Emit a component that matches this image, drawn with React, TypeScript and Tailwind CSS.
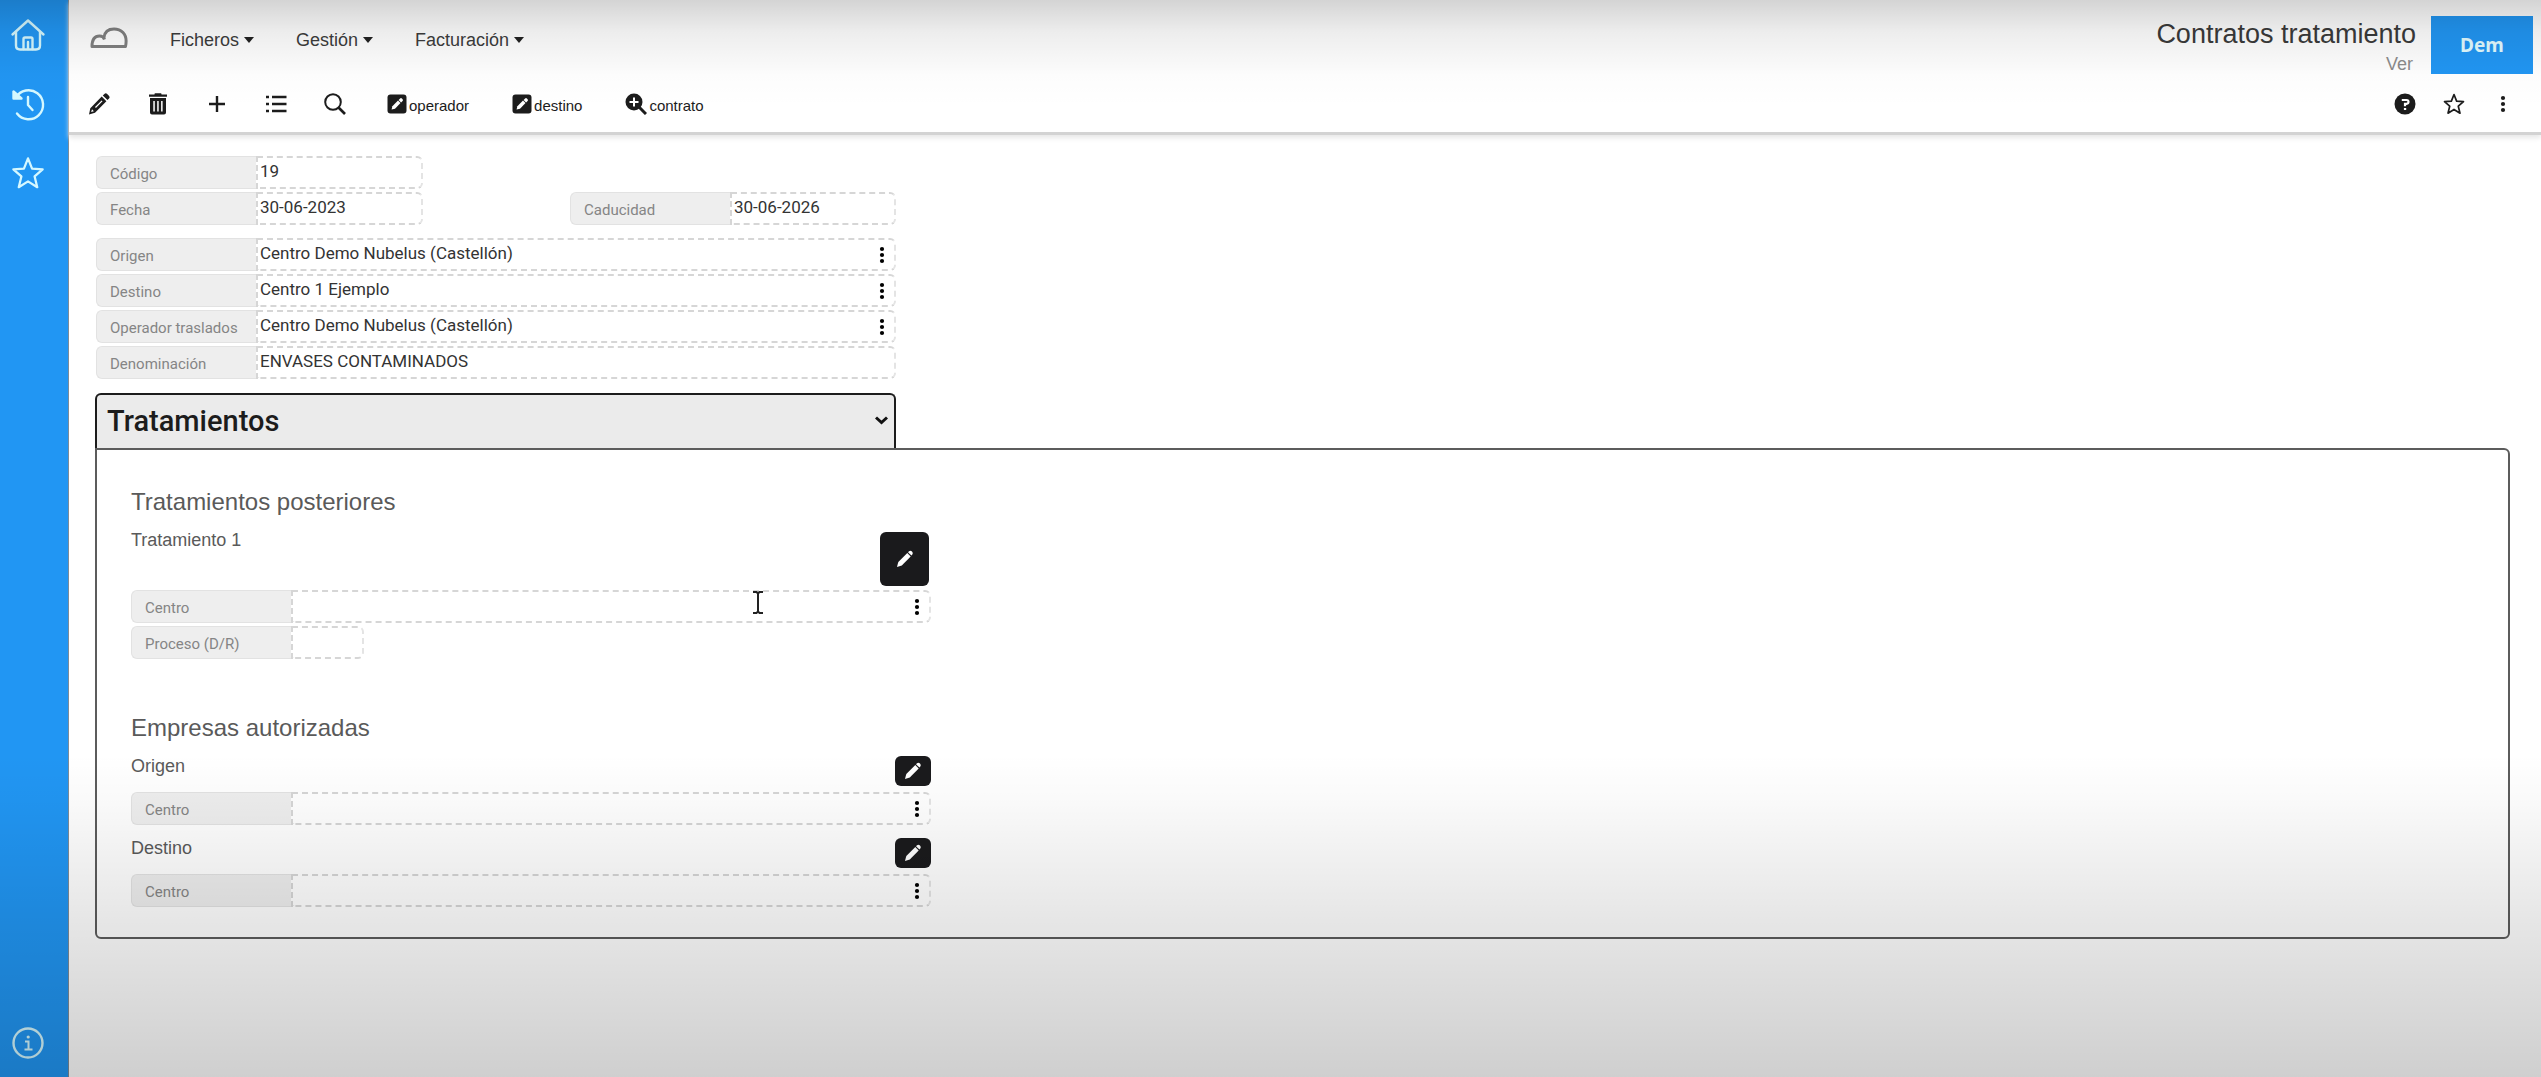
import { useState } from "react";
import type { ReactNode } from "react";

const menus = ["Ficheros", "Gestión", "Facturación"];

const HomeIcon = () => (
  <svg className="size-9" viewBox="0 0 36 36" fill="none" stroke="currentColor" strokeWidth="2.4" strokeLinecap="round" strokeLinejoin="round">
    <path d="M2.500 17.500 18 3.500 33.500 17.500" />
    <path d="M6 15v13.500q0 4 4 4h16q4 0 4-4V15" />
    <path d="M13.500 32V22q0-1.500 1.500-1.500h6q1.500 0 1.500 1.500V32M18 25v7" />
  </svg>
);

const HistoryIcon = () => (
  <svg className="size-9" viewBox="0 0 36 36" fill="none" stroke="currentColor" strokeWidth="2.4" strokeLinecap="round" strokeLinejoin="round">
    <path d="M6 11.500A14.500 14.500 0 1 1 7 27.500" />
    <path d="M3.500 5.500v7h8Z" fill="currentColor" />
    <path d="M18 11v8l4.500 5" />
  </svg>
);

const StarIcon = ({ className, strokeWidth = 2.4 }: { className?: string; strokeWidth?: number }) => (
  <svg className={className} viewBox="0 0 36 36" fill="none" stroke="currentColor" strokeWidth={strokeWidth} strokeLinejoin="round">
    <path d="M18 2.500 22.300 13.300 33.500 14.100 25 21.600 27.800 33 18 26.900 8.200 33 11 21.600 2.500 14.100 13.700 13.300Z" />
  </svg>
);

const InfoIcon = () => (
  <svg className="size-8" viewBox="0 0 32 32" fill="none" stroke="currentColor" strokeWidth="2">
    <circle cx="16" cy="16" r="14.500" strokeWidth="2.4" />
    <circle cx="16.200" cy="10" r="1.600" fill="currentColor" stroke="none" />
    <path d="M13 14.500h3.500V22M12.500 22.500h8" />
  </svg>
);

const CloudLogo = () => (
  <svg className="h-[22px] w-[38px]" viewBox="0 0 38 22" fill="none" stroke="#808080" strokeWidth="3" strokeLinejoin="round">
    <path d="M14.500 12.500Q13.500 9 9.500 9 2 9 2 19.500H35.500Q37.500 10 33 5.500 29.500 2 24 2 15 2 14 10.500" />
  </svg>
);

const PencilIcon = ({ className }: { className?: string }) => (
  <svg className={className} viewBox="0 0 22 22" fill="currentColor">
    <path d="M14.800 2.400 16.400.9q1.400-1.200 2.800.1l1.700 1.700q1.300 1.400.1 2.800l-1.500 1.600Z" />
    <path fillRule="evenodd" d="M13.700 3.500 18.400 8.200 7 19.800 1 21.400 2.300 15.200ZM4 16.300 3.200 19 5.900 18.200ZM7 14l.9.9L14.500 8.300l-.9-.9Z" />
  </svg>
);

const SolidPencilIcon = () => (
  <svg className="size-[18px]" viewBox="0 0 18 18" fill="currentColor">
    <path d="M12 2.300 13 1.300q1.500-1.200 3 .2t.3 3L15.400 5.600Z" />
    <path d="M11.300 3 14.700 6.400 5.800 15.400 1 17 2.300 12Z" />
  </svg>
);

const TrashIcon = () => (
  <svg className="h-[22px] w-[18px]" viewBox="0 0 18 22" fill="currentColor">
    <path d="M5.500 1q0-.8.800-.8h5.400q.8 0 .8.800v.5H18v2.200H0V1.500h5.500Z" />
    <path fillRule="evenodd" d="M1 5h16v14.500q0 2-2 2H3q-2 0-2-2ZM4.300 8v10.500h1.500V8Zm3.900 0v10.500h1.500V8Zm3.900 0v10.500h1.500V8Z" />
  </svg>
);

const PlusIcon = () => (
  <svg className="size-[18px]" viewBox="0 0 18 18" stroke="currentColor" strokeWidth="2.400">
    <path d="M9 1v16M1 9h16" />
  </svg>
);

const ListIcon = () => (
  <svg className="h-[18px] w-[22px]" viewBox="0 0 22 18" stroke="currentColor" strokeWidth="2.400">
    <path d="M1 2h3M1 9h3M1 16h3M7 2h14.500M7 9h14.500M7 16h14.500" />
  </svg>
);

const SearchIcon = () => (
  <svg className="size-[22px]" viewBox="0 0 22 22" fill="none" stroke="currentColor" strokeWidth="2">
    <circle cx="9" cy="9" r="7.800" />
    <path d="m14.500 14.500 6.500 6.500" strokeWidth="2.600" />
  </svg>
);

const PenSquareIcon = () => (
  <svg className="size-[20px]" viewBox="0 0 20 20">
    <rect x="0.500" y="0.500" width="19" height="19" rx="3" fill="currentColor" />
    <path d="M11.600 6 13.100 4.500q.9-.8 1.800 0l.7.8q.8.900 0 1.800L14.100 8.500Z" fill="#fff" />
    <path d="M11 6.600 13.500 9.100 8 14.700 4.600 15.600 5.400 12.200Z" fill="#fff" />
  </svg>
);

const ZoomPlusIcon = () => (
  <svg className="size-[22px]" viewBox="0 0 22 22">
    <circle cx="9" cy="9" r="8.500" fill="currentColor" />
    <path d="m14 14 7 7" stroke="currentColor" strokeWidth="3" />
    <path d="M9 4.500v9M4.500 9h9" stroke="#fff" strokeWidth="2" />
  </svg>
);

const HelpIcon = () => (
  <svg className="size-[22px]" viewBox="0 0 22 22" fill="none">
    <circle cx="11" cy="11" r="10.500" fill="currentColor" />
    <path d="M7.800 7h4.700q2 0 2 1.800t-2 2H11v2.400" stroke="#fff" strokeWidth="2.200" />
    <path d="M9.900 15h2.300v2H9.900Z" fill="#fff" />
  </svg>
);

const DotsIcon = ({ className }: { className?: string }) => (
  <svg className={className} viewBox="0 0 6 18" fill="currentColor">
    <circle cx="3" cy="3" r="2.100" />
    <circle cx="3" cy="9" r="2.100" />
    <circle cx="3" cy="15" r="2.100" />
  </svg>
);

const SideButton = ({ label, children }: { label: string; children: ReactNode }) => (
  <button aria-label={label} className="flex h-[69px] w-14 items-center justify-center">
    {children}
  </button>
);

const ToolButton = ({ label, children }: { label: string; children: ReactNode }) => (
  <button aria-label={label} className="flex h-10 w-[59px] items-center justify-center">
    {children}
  </button>
);

type FieldProps = {
  id: string;
  label: string;
  value?: string;
  width?: string;
  picker?: boolean;
};

const Field = ({ id, label, value = "", width = "w-full", picker }: FieldProps) => (
  <div className={`flex h-[33px] font-[Roboto,sans-serif] ${width}`}>
    <label
      htmlFor={id}
      className="w-[160px] shrink-0 truncate rounded-l-md border border-r-0 border-[#e2e2e2] bg-[#eeeeee] pt-[3px] pl-[13px] text-[15px] leading-[28px] text-[#858585]"
    >
      {label}
    </label>
    <div className="flex min-w-0 flex-1 rounded-r-md border-2 border-dashed border-[#d6d6d6] border-r-[#e4e4e4]">
      <input
        id={id}
        readOnly
        defaultValue={value}
        className="min-w-0 flex-1 bg-transparent pb-px pl-[2px] text-[17px] text-[#333] outline-none"
      />
      {picker && (
        <button aria-label={`Opciones de ${label}`} className="flex w-6 items-center justify-center text-black">
          <DotsIcon className="h-[18px] w-[6px]" />
        </button>
      )}
    </div>
  </div>
);

const EditButton = ({ label, large }: { label: string; large?: boolean }) => (
  <button
    aria-label={label}
    className={`flex items-center justify-center rounded-md bg-[#1a1a1c] text-white ${large ? "mr-[2px] h-[54px] w-[49px]" : "h-[30px] w-9"}`}
  >
    <SolidPencilIcon />
  </button>
);

const Sidebar = () => (
  <aside className="flex w-[69px] shrink-0 flex-col border-r border-[#7d8b98] bg-[#2196f3] text-[#d5f8ff]">
    <SideButton label="Inicio"><HomeIcon /></SideButton>
    <SideButton label="Historial"><HistoryIcon /></SideButton>
    <SideButton label="Favoritos"><StarIcon className="size-[34px]" /></SideButton>
    <div className="mt-auto">
      <SideButton label="Información"><InfoIcon /></SideButton>
    </div>
  </aside>
);

const Header = () => (
  <header className="border-b-3 border-[#d3d3d3] bg-white text-[#1c1c1c] shadow-[0_3px_5px_#e8e8e8]">
    <div className="flex h-[76px] items-start justify-between">
      <nav className="flex h-[76px] items-center gap-[42px] pt-1 pl-[21px] text-[18px]">
        <a href="#inicio" aria-label="Nubelus" className="pb-1"><CloudLogo /></a>
        {menus.map((name) => (
          <button key={name} className="flex items-center gap-[5px] text-[#3c3c3c]">
            {name}
            <svg className="h-[6px] w-[10px]" viewBox="0 0 10 6" fill="#222">
              <path d="M0 0h10L5 6Z" />
            </svg>
          </button>
        ))}
      </nav>
      <div className="flex gap-[15px] pt-4 pr-2">
        <div className="pt-[2px] text-right">
          <h1 className="text-[27px] leading-[32px] text-[#3a3a3a]">Contratos tratamiento</h1>
          <p className="pr-[3px] text-[18px] leading-7 text-[#8c8c8c]">Ver</p>
        </div>
        <button className="h-[58px] w-[102px] bg-[#2196f3] font-['Noto_Sans',sans-serif] text-[19px] font-bold text-[#e2fbff]">
          Dem
        </button>
      </div>
    </div>
    <div className="flex h-14 items-center justify-between pr-[14px] text-[15px]">
      <div className="flex items-center">
        <ToolButton label="Editar"><PencilIcon className="size-[22px]" /></ToolButton>
        <ToolButton label="Borrar"><TrashIcon /></ToolButton>
        <ToolButton label="Añadir"><PlusIcon /></ToolButton>
        <ToolButton label="Listado"><ListIcon /></ToolButton>
        <ToolButton label="Buscar"><SearchIcon /></ToolButton>
        <div className="flex items-center gap-[43px] pl-[23px]">
          <button className="flex items-center gap-[2px]"><PenSquareIcon /><span className="pt-1">operador</span></button>
          <button className="flex items-center gap-[2px]"><PenSquareIcon /><span className="pt-1">destino</span></button>
          <button className="flex items-center gap-[2px]"><ZoomPlusIcon /><span className="pt-1">contrato</span></button>
        </div>
      </div>
      <div className="flex">
        <button aria-label="Ayuda" className="flex w-[49px] items-center justify-center"><HelpIcon /></button>
        <button aria-label="Favorito" className="flex w-[49px] items-center justify-center"><StarIcon className="size-[22px]" strokeWidth={2.8} /></button>
        <button aria-label="Más" className="flex w-[49px] items-center justify-center"><DotsIcon className="h-5 w-[6px]" /></button>
      </div>
    </div>
  </header>
);

const TreatmentsPanel = () => (
  <section className="rounded-md rounded-tl-none border-2 border-[#5c5c5c] px-[34px] pt-[35px] pb-[30px] text-[#5a5a5a]">
    <div className="w-[800px]">
      <h2 className="text-[24px] leading-[34px]">Tratamientos posteriores</h2>
      <div className="flex items-start justify-between pt-[13px] pb-1">
        <h3 className="text-[18px] leading-4">Tratamiento 1</h3>
        <EditButton label="Editar tratamiento 1" large />
      </div>
      <div className="relative grid gap-[3px]">
        <Field id="centro-tratamiento" label="Centro" picker />
        <Field id="proceso" label="Proceso (D/R)" width="w-[233px]" />
        <svg className="pointer-events-none absolute top-0 left-[622px] h-6 w-[10px]" viewBox="0 0 10 24" fill="none" stroke="#222" strokeWidth="2">
          <path d="M0 2h3.500L5 3.500 6.500 2H10M5 3v19M0 23h3.500L5 21.500 6.500 23H10" />
        </svg>
      </div>

      <h2 className="pt-[52px] text-[24px] leading-[34px]">Empresas autorizadas</h2>
      <div className="flex items-start justify-between pt-[11px] pb-[6px]">
        <h3 className="text-[18px] leading-5">Origen</h3>
        <EditButton label="Editar origen" />
      </div>
      <Field id="centro-origen" label="Centro" picker />
      <div className="flex items-start justify-between pt-[13px] pb-[6px]">
        <h3 className="text-[18px] leading-5">Destino</h3>
        <EditButton label="Editar destino" />
      </div>
      <Field id="centro-destino" label="Centro" picker />
    </div>
  </section>
);

const App = () => {
  const [section, setSection] = useState("Tratamientos");

  return (
    <div className="relative flex min-h-screen bg-white font-['Liberation_Sans',Arial,sans-serif]">
      <Sidebar />
      <div className="min-w-0 flex-1">
        <Header />
        <main className="pt-[21px] pr-[31px] pl-[26px]">
          <form className="grid w-[801px] gap-[3px] pl-px">
            <Field id="codigo" label="Código" value="19" width="w-[327px]" />
            <div className="flex justify-between pb-[10px]">
              <Field id="fecha" label="Fecha" value="30-06-2023" width="w-[327px]" />
              <Field id="caducidad" label="Caducidad" value="30-06-2026" width="w-[326px]" />
            </div>
            <Field id="origen" label="Origen" value="Centro Demo Nubelus (Castellón)" picker />
            <Field id="destino" label="Destino" value="Centro 1 Ejemplo" picker />
            <Field id="operador" label="Operador traslados" value="Centro Demo Nubelus (Castellón)" picker />
            <Field id="denominacion" label="Denominación" value="ENVASES CONTAMINADOS" />
          </form>

          <div className="grid w-[801px] items-center pt-[14px] font-[Roboto,sans-serif]">
            <select
              aria-label="Sección"
              value={section}
              onChange={(e) => setSection(e.target.value)}
              className="col-start-1 row-start-1 h-[55px] w-full appearance-none rounded-t-md border-2 border-b-0 border-[#1c1c1c] bg-[#ebebeb] pl-[10px] text-[29px] font-medium text-[#1c1c1c]"
            >
              <option>Tratamientos</option>
            </select>
            <svg className="pointer-events-none col-start-1 row-start-1 mr-2 h-[9px] w-[13px] justify-self-end" viewBox="0 0 13 9" fill="none" stroke="#111" strokeWidth="3">
              <path d="m1 1.500 5.500 5 5.500-5" />
            </svg>
          </div>
          <TreatmentsPanel />
        </main>
      </div>

      {/* shading over the whole page, darker at the top and bottom edges */}
      <div className="pointer-events-none absolute inset-0 bg-[linear-gradient(to_bottom,rgba(0,0,0,0.17)_0%,rgba(0,0,0,0.07)_3%,rgba(0,0,0,0.01)_7%,rgba(0,0,0,0)_10%,rgba(0,0,0,0)_70%,rgba(0,0,0,0.02)_74%,rgba(0,0,0,0.1)_86%,rgba(0,0,0,0.19)_100%)]" />
    </div>
  );
};

export default App;
